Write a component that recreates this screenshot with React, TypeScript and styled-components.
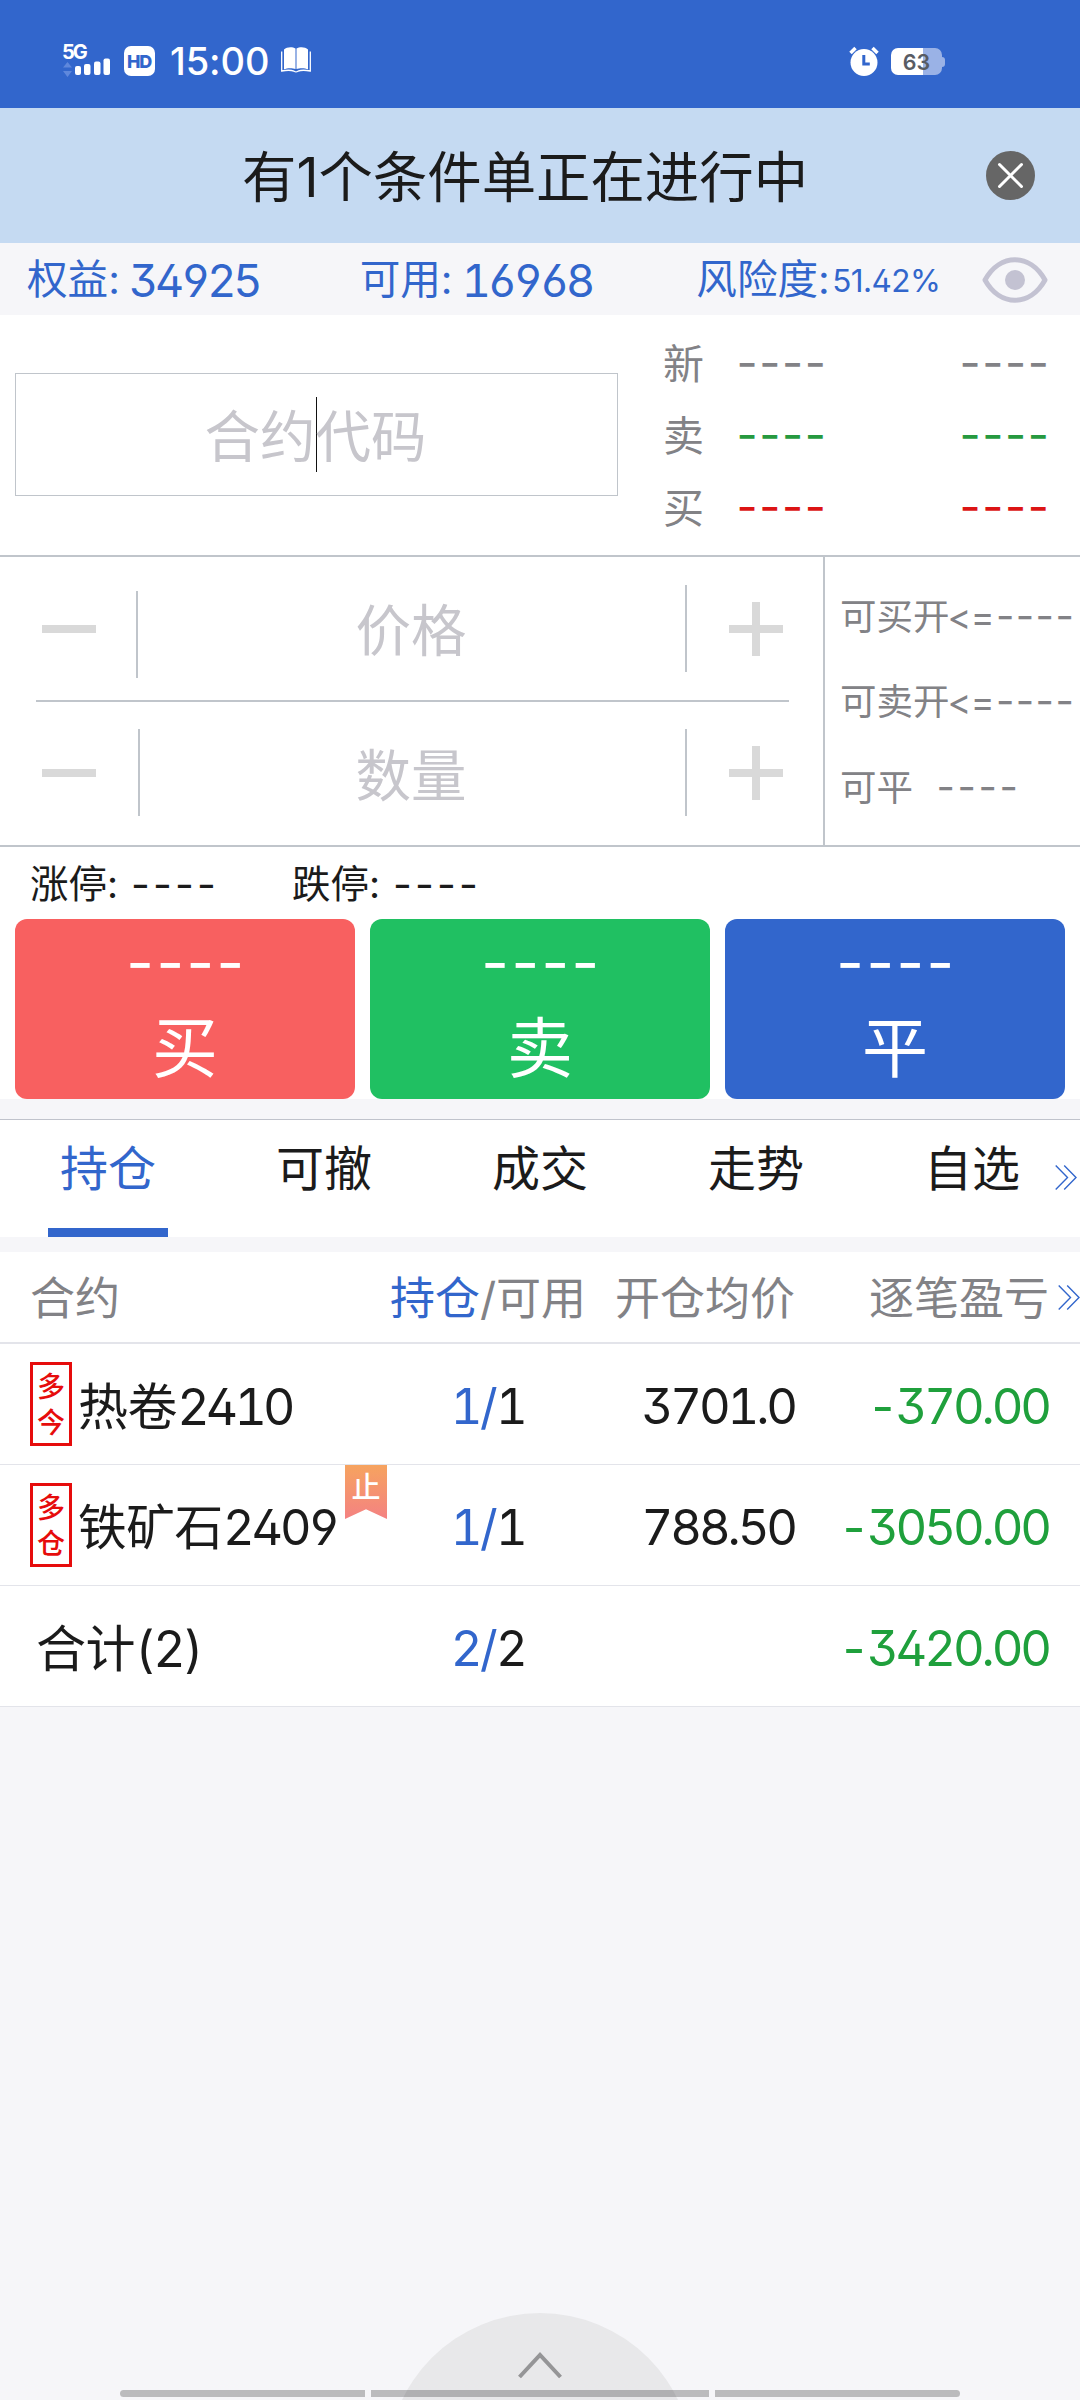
import React from 'react';
import styled, { createGlobalStyle } from 'styled-components';

const c = {
  brand: '#3266cc',
  banner: '#c5daf2',
  page: '#f6f6f9',
  ink: '#1b1b1b',
  grey: '#828286',
  hint: '#c7c6cc',
  line: '#c0c5cb',
  hair: '#e3e4ea',
  red: '#e60c0c',
  green: '#1fa03c',
};

const GlobalStyle = createGlobalStyle`
  * { box-sizing: border-box; }
  body {
    margin: 0;
    background: ${c.page};
    font-family: Inter, "Noto Sans CJK SC", sans-serif;
    font-weight: 400;
    color: ${c.ink};
  }
  svg { display: block; flex: none; }
`;

const Screen = styled.main`
  display: flex;
  flex-direction: column;
  width: 1080px;
  height: 2400px;
  overflow: hidden;
  background: ${c.page};
  white-space: nowrap;
`;

/* ---------- status bar ---------- */

const StatusBar = styled.header`
  display: flex;
  justify-content: space-between;
  height: 108px;
  padding: 43px 135px 0 62px;
  background: ${c.brand};
  color: #fff;
`;

const StatusGroup = styled.div`
  display: flex;
  align-items: flex-start;
`;

const Signal = styled.div`
  width: 62px;
`;

const SignalLabel = styled.div`
  height: 15px;
  font-size: 20px;
  font-weight: 700;
  line-height: 19px;
  letter-spacing: -2px;
`;

const HdBadge = styled.div`
  width: 31px;
  height: 30px;
  margin-top: 3px;
  border-radius: 7px;
  background: #fff;
  color: ${c.brand};
  font-size: 18px;
  font-weight: 800;
  line-height: 31px;
  text-align: center;
  letter-spacing: -1.2px;
  text-indent: -1px;
`;

const Clock = styled.time`
  width: 110px;
  margin: 0 0 0 15px;
  font-size: 38px;
  font-weight: 500;
  line-height: 37px;
  letter-spacing: -0.1px;
`;

const BookIcon = styled.svg`
  margin: 4px 0 0 1px;
`;

const AlarmIcon = styled.svg`
  margin: 3px 12px 0 0;
`;

const Battery = styled.div`
  display: flex;
  align-items: center;
  margin-top: 5px;
`;

const BatteryBody = styled.div`
  width: 51px;
  height: 27px;
  border-radius: 7px;
  background: linear-gradient(90deg, #fff 32px, #9ab2e6 32px);
  color: #585c64;
  font-size: 21.5px;
  font-weight: 600;
  line-height: 28px;
  text-align: center;
`;

const BatteryTip = styled.div`
  width: 3px;
  height: 10px;
  border-radius: 0 4px 4px 0;
  background: #9ab2e6;
`;

/* ---------- notice + account ---------- */

const Notice = styled.section`
  display: flex;
  align-items: center;
  height: 135px;
  padding: 0 45px 0 242px;
  background: ${c.banner};
`;

const NoticeText = styled.p`
  flex: 1;
  margin: 0;
  font-size: 54.4px;
  line-height: 80px;
  padding-top: 3px;
`;

const Account = styled.section`
  display: flex;
  align-items: center;
  height: 72px;
  padding: 1px 32px 0 27px;
  color: ${c.brand};
`;

const Stat = styled.div<{ $w: number }>`
  display: flex;
  align-items: center;
  width: ${(p) => p.$w}px;
`;

const StatLabel = styled.span<{ $w: number }>`
  width: ${(p) => p.$w}px;
  font-size: 40.6px;
  line-height: 60px;
`;

const StatValue = styled.span<{ $small?: boolean }>`
  font-size: ${(p) => (p.$small ? 31.5 : 45)}px;
  line-height: 60px;
  padding-top: 2px;
  letter-spacing: ${(p) => (p.$small ? -0.6 : -3.1)}px;
  font-feature-settings: ${(p) => (p.$small ? "'ss01'" : "'ss01', 'tnum'")};
`;

/* ---------- contract ---------- */

const Contract = styled.section`
  display: flex;
  height: 242px;
  padding-left: 15px;
  border-bottom: 2px solid ${c.line};
  background: #fff;
`;

const CodeInput = styled.div`
  display: flex;
  align-items: center;
  justify-content: center;
  width: 603px;
  height: 123px;
  margin-top: 58px;
  border: 1.5px solid ${c.line};
  color: ${c.hint};
  font-size: 55.5px;
  line-height: 80px;
  padding: 5px 2px 0 0;
`;

const Caret = styled.i`
  width: 1px;
  height: 75px;
  margin: -5px -1px 0 0;
  background: #111;
`;

const Quotes = styled.div`
  margin: 13px 0 0 45px;
`;

const QuoteRow = styled.div`
  display: grid;
  grid-template-columns: 73.5px 223px 100px;
  height: 72px;
  align-items: center;
  color: ${c.grey};
  font-size: 41px;
  line-height: 60px;
`;

const Dashes = styled.span<{ $size: number; $gap: number; $color?: string; $lift?: number }>`
  font-size: ${(p) => p.$size}px;
  letter-spacing: ${(p) => p.$gap}px;
  color: ${(p) => p.$color ?? 'inherit'};
  padding-bottom: ${(p) => p.$lift ?? 0}px;
`;

/* ---------- order form ---------- */

const Order = styled.section`
  display: flex;
  height: 290px;
  border-bottom: 2px solid ${c.line};
  background: #fff;
`;

const Steppers = styled.div`
  width: 825px;
  border-right: 2px solid ${c.line};
`;

const Stepper = styled.div`
  display: flex;
  height: 143px;
  align-items: flex-start;
`;

const StepButton = styled.div<{ $shift?: number }>`
  width: ${(p) => 136 + (p.$shift ?? 0)}px;
  padding-left: 42px;
`;

const Rule = styled.div<{ $top: number }>`
  width: 2px;
  height: 87px;
  margin-top: ${(p) => p.$top}px;
  background: ${c.line};
`;

const Field = styled.div<{ $shift: number; $top: number }>`
  width: ${(p) => 547 - p.$shift}px;
  padding-right: ${(p) => p.$shift + 1}px;
  margin-top: ${(p) => p.$top}px;
  color: ${c.hint};
  font-size: 55.5px;
  line-height: 80px;
  text-align: center;
`;

const MidLine = styled.hr`
  width: 753px;
  height: 2px;
  margin: 0 0 0 36px;
  border: 0;
  background: ${c.line};
`;

const Limits = styled.div`
  padding: 17px 0 0 15px;
  color: ${c.grey};
`;

const LimitRow = styled.div`
  display: flex;
  height: 85.5px;
  align-items: center;
  font-size: 36.5px;
  line-height: 60px;
`;

const Symbols = styled.span`
  width: 48.5px;
  margin-left: -2px;
  font-size: 36px;
  letter-spacing: -0.6px;
`;

const CloseLabel = styled.span`
  width: 96.5px;
`;

const PriceBand = styled.section`
  display: flex;
  height: 72px;
  padding: 7px 0 0 30px;
  background: #fff;
  font-size: 38.5px;
  line-height: 60px;
`;

const BandLabel = styled.span`
  width: 101px;
`;

const BandItem = styled.div`
  display: flex;
  width: 262px;
`;

const Actions = styled.section`
  display: grid;
  grid-template-columns: repeat(3, 340px);
  gap: 15px;
  height: 180px;
  padding: 0 15px;
  background: #fff;
`;

const ActionButton = styled.div<{ $bg: string }>`
  display: flex;
  flex-direction: column;
  align-items: center;
  border-radius: 12px;
  background: ${(p) => p.$bg};
  color: #fff;
`;

const ActionPrice = styled.div`
  height: 84px;
  padding-left: 3px;
  line-height: 87px;
`;

const ActionName = styled.div`
  font-size: 66px;
  line-height: 91px;
`;

/* ---------- tabs ---------- */

const Tabs = styled.nav`
  position: relative;
  display: grid;
  grid-template-columns: repeat(5, 216px);
  height: 118px;
  margin-top: 20px;
  border-top: 1px solid #c0c3cc;
  background: #fff;
`;

const Tab = styled.div<{ $active?: boolean }>`
  display: flex;
  flex-direction: column;
  align-items: center;
  justify-content: space-between;
  padding-top: 13px;
  color: ${(p) => (p.$active ? c.brand : c.ink)};
  font-size: 48px;
  line-height: 72px;
`;

const Underline = styled.div`
  width: 120px;
  height: 9px;
  background: ${c.brand};
`;

const TabsMore = styled.div`
  position: absolute;
  right: 3px;
  top: 45px;
`;

/* ---------- positions ---------- */

const columns = '384px 208px 202px 254px 1fr';

const TableHead = styled.div`
  display: grid;
  grid-template-columns: ${columns};
  align-items: center;
  height: 92px;
  margin-top: 15px;
  border-bottom: 2px solid ${c.hair};
  background: #fff;
  color: ${c.grey};
  font-size: 45px;
  line-height: 66px;
`;

const HeadCell = styled.div<{ $align?: string }>`
  padding: ${(p) => (p.$align ? '3px 0 0' : '3px 0 0 30px')};
  margin-right: ${(p) => (p.$align === 'right' ? -1 : 0)}px;
  text-align: ${(p) => p.$align ?? 'left'};
`;

const HeadMore = styled.div`
  padding-left: 10px;
`;

const Accent = styled.span`
  color: ${c.brand};
`;

const TableRow = styled.div`
  display: grid;
  grid-template-columns: ${columns};
  align-items: center;
  height: 121px;
  border-bottom: 1px solid ${c.hair};
  background: #fff;
  font-size: 49px;
  line-height: 70px;
  font-feature-settings: 'tnum', 'ss01';
`;

const NameCell = styled.div`
  position: relative;
  display: flex;
  align-items: center;
  height: 120px;
  padding-left: 30px;
`;

const Tag = styled.div`
  width: 42px;
  height: 84px;
  padding-top: 4px;
  margin-right: 6px;
  border: 3px solid ${c.red};
  color: ${c.red};
  font-size: 28px;
  font-weight: 500;
  line-height: 36px;
  text-align: center;
  white-space: normal;
`;

const Name = styled.span<{ $size: number; $indent: number }>`
  font-size: ${(p) => p.$size}px;
  margin-left: ${(p) => p.$indent}px;
  padding-top: 6px;
  letter-spacing: -0.4px;
`;

const Code = styled.span<{ $tight: number }>`
  letter-spacing: ${(p) => -p.$tight}px;
`;

const Ribbon = styled.div`
  position: absolute;
  left: 345px;
  top: 0;
  width: 42px;
  height: 54px;
  clip-path: polygon(0 0, 100% 0, 100% 100%, 50% 82%, 0 100%);
  background: linear-gradient(#f6a35f, #f48282);
  color: #fff;
  font-size: 29px;
  font-weight: 500;
  line-height: 46px;
  text-align: center;
`;

const Lots = styled.div`
  display: grid;
  grid-template-columns: 1fr 16px 1fr;
  width: 208px;
  padding-top: 5px;
`;

const LotHeld = styled.span`
  color: ${c.brand};
  text-align: right;
  letter-spacing: -2.5px;
`;

const Num = styled.div<{ $color?: string }>`
  padding-top: 5px;
  margin-right: -1px;
  text-align: right;
  color: ${(p) => p.$color ?? 'inherit'};
  letter-spacing: -3.1px;
`;

/* ---------- bottom ---------- */

const Bottom = styled.footer`
  position: relative;
  flex: 1;
  overflow: hidden;
`;

const Drawer = styled.div`
  position: absolute;
  left: 387px;
  bottom: -219px;
  width: 306px;
  height: 306px;
  padding: 37px 0 0 131px;
  border-radius: 50%;
  background: #e8e8ea;
`;

const NavBars = styled.div`
  position: absolute;
  left: 120px;
  bottom: 3px;
  display: grid;
  grid-template-columns: 245px 338px 245px;
  gap: 6px;
`;

const NavBar = styled.div<{ $radius?: string }>`
  height: 7px;
  border-radius: ${(p) => p.$radius ?? '0'};
  background: rgba(0, 0, 0, 0.24);
`;

const DoubleChevron = () => (
  <svg width="22" height="25" viewBox="0 0 22 25" fill="none" stroke={c.brand} strokeWidth="1.4">
    <path d="M.7.5 12.5 12.5.7 24.5M9.2.5 21 12.5 9.2 24.5" />
  </svg>
);

const Minus = ({ top }: { top: number }) => (
  <svg width="54" height={top + 8} fill="#d9d9d9">
    <rect y={top} width="54" height="8" />
  </svg>
);

const Plus = ({ top }: { top: number }) => (
  <svg width="54" height={top + 54} fill="#d9d9d9">
    <rect y={top + 23} width="54" height="8" />
    <rect x="23" y={top} width="8" height="54" />
  </svg>
);

const quotes = [
  { label: '新', color: c.grey },
  { label: '卖', color: '#26993f' },
  { label: '买', color: '#dc1414' },
];

const actions = [
  { label: '买', bg: '#f86060' },
  { label: '卖', bg: '#20c062' },
  { label: '平', bg: c.brand },
];

const tabs = ['持仓', '可撤', '成交', '走势', '自选'];

const positions = [
  { tag: '多今', name: '热卷', code: '2410', tight: 3.8, size: 50, held: 1, free: 1, price: '3701.0', profit: '-370.00' },
  { tag: '多仓', name: '铁矿石', code: '2409', tight: 3, size: 48.7, held: 1, free: 1, price: '788.50', profit: '-3050.00', stop: true },
  { tag: '', name: '合计', code: '(2)', tight: 1.6, size: 50, held: 2, free: 2, price: '', profit: '-3420.00' },
];

export default function App() {
  return (
    <Screen>
      <GlobalStyle />
      <StatusBar>
        <StatusGroup>
          <Signal>
            <SignalLabel>5G</SignalLabel>
            <svg width="50" height="20" viewBox="0 0 50 20">
              <path d="M1 9.5 5.5 4 10 9.5zM1 13h9l-4.500 6z" fill="#5f88dc" />
              <g fill="#fff">
                <rect x="13" y="8" width="6" height="9" rx="2" />
                <rect x="22" y="6" width="6.500" height="11" rx="2" />
                <rect x="32" y="3.500" width="6.500" height="13.500" rx="2" />
                <rect x="41.500" y="0.500" width="6.500" height="16.500" rx="2" />
              </g>
            </svg>
          </Signal>
          <HdBadge>HD</HdBadge>
          <Clock>15:00</Clock>
          <BookIcon width="30" height="26" viewBox="0 0 30 26" fill="#fff">
            <path d="M3 2.500C6-.3 11.500-.3 14.500 1.600V22C11.500 20.800 6 20.800 3 22.300zM15.500 1.600c3-1.900 8.500-1.900 11.500.900v19.800c-3-1.500-8.500-1.500-11.500-.300z" />
            <path d="M.7 4.500v19.500c4-.8 9-1.200 12.300.2 1 .7 3 .7 4 0 3.300-1.400 8.300-1 12.300-.2V4.500" fill="none" stroke="#fff" strokeWidth="1.300" />
          </BookIcon>
        </StatusGroup>
        <StatusGroup>
          <AlarmIcon width="30" height="30" viewBox="0 0 30 30">
            <circle cx="15" cy="16.500" r="13.500" fill="#fff" />
            <path d="M1.500 7 6.500 2M28.500 7 23.500 2" stroke="#fff" strokeWidth="3.500" />
            <path d="M14.800 9v9h6" fill="none" stroke={c.brand} strokeWidth="3" />
          </AlarmIcon>
          <Battery>
            <BatteryBody>63</BatteryBody>
            <BatteryTip />
          </Battery>
        </StatusGroup>
      </StatusBar>

      <Notice>
        <NoticeText>有1个条件单正在进行中</NoticeText>
        <svg width="49" height="49" viewBox="0 0 49 49">
          <circle cx="24.500" cy="24.500" r="24.500" fill="#666" />
          <path d="M13.500 13.500 35.500 35.500M35.500 13.500 13.500 35.500" stroke="#fff" strokeWidth="3" strokeLinecap="round" />
        </svg>
      </Notice>

      <Account>
        <Stat $w={333}>
          <StatLabel $w={102}>权益:</StatLabel>
          <StatValue>34925</StatValue>
        </Stat>
        <Stat $w={337}>
          <StatLabel $w={102}>可用:</StatLabel>
          <StatValue>16968</StatValue>
        </Stat>
        <Stat $w={286}>
          <StatLabel $w={136}>风险度:</StatLabel>
          <StatValue $small>51.42%</StatValue>
        </Stat>
        <svg width="66" height="48" viewBox="0 0 66 48">
          <path d="M3 24C18-3 48-3 63 24 48 51 18 51 3 24z" fill="none" stroke="#c3c2d2" strokeWidth="5" strokeLinejoin="round" />
          <circle cx="33" cy="24" r="10" fill="#c3c2d2" />
        </svg>
      </Account>

      <Contract>
        <CodeInput>
          合约<Caret />代码
        </CodeInput>
        <Quotes>
          {quotes.map((q) => (
            <QuoteRow key={q.label}>
              <span>{q.label}</span>
              <Dashes $size={46} $gap={1.6} $lift={5} $color={q.color}>----</Dashes>
              <Dashes $size={46} $gap={1.6} $lift={5} $color={q.color}>----</Dashes>
            </QuoteRow>
          ))}
        </Quotes>
      </Contract>

      <Order>
        <Steppers>
          <Stepper>
            <StepButton><Minus top={68} /></StepButton>
            <Rule $top={34} />
            <Field $shift={0} $top={34}>价格</Field>
            <Rule $top={28} />
            <StepButton><Plus top={45} /></StepButton>
          </Stepper>
          <MidLine />
          <Stepper>
            <StepButton $shift={2}><Minus top={67} /></StepButton>
            <Rule $top={27} />
            <Field $shift={2} $top={34}>数量</Field>
            <Rule $top={27} />
            <StepButton><Plus top={44} /></StepButton>
          </Stepper>
        </Steppers>
        <Limits>
          {['可买开', '可卖开'].map((label) => (
            <LimitRow key={label}>
              {label}
              <Symbols>&lt;=</Symbols>
              <Dashes $size={40} $gap={1.4} $lift={2}>----</Dashes>
            </LimitRow>
          ))}
          <LimitRow>
            <CloseLabel>可平</CloseLabel>
            <Dashes $size={40} $gap={2.6} $lift={2}>----</Dashes>
          </LimitRow>
        </Limits>
      </Order>

      <PriceBand>
        {['涨停:', '跌停:'].map((label) => (
          <BandItem key={label}>
            <BandLabel>{label}</BandLabel>
            <Dashes $size={41} $gap={3.1}>----</Dashes>
          </BandItem>
        ))}
      </PriceBand>

      <Actions>
        {actions.map((a) => (
          <ActionButton key={a.label} $bg={a.bg}>
            <ActionPrice>
              <Dashes $size={60} $gap={2.5}>----</Dashes>
            </ActionPrice>
            <ActionName>{a.label}</ActionName>
          </ActionButton>
        ))}
      </Actions>

      <Tabs>
        {tabs.map((t, i) => (
          <Tab key={t} $active={i === 0}>
            {t}
            {i === 0 && <Underline />}
          </Tab>
        ))}
        <TabsMore><DoubleChevron /></TabsMore>
      </Tabs>

      <TableHead>
        <HeadCell>合约</HeadCell>
        <HeadCell $align="center"><Accent>持仓</Accent>/可用</HeadCell>
        <HeadCell $align="right">开仓均价</HeadCell>
        <HeadCell $align="right">逐笔盈亏</HeadCell>
        <HeadMore><DoubleChevron /></HeadMore>
      </TableHead>
      {positions.map((p) => (
        <TableRow key={p.name}>
          <NameCell>
            {p.tag && <Tag>{p.tag}</Tag>}
            <Name $size={p.size} $indent={p.tag ? 0 : 6}>
              {p.name}
              <Code $tight={p.tight}>{p.code}</Code>
            </Name>
            {p.stop && <Ribbon>止</Ribbon>}
          </NameCell>
          <Lots>
            <LotHeld>{p.held}</LotHeld>
            <Accent>/</Accent>
            <span>{p.free}</span>
          </Lots>
          <Num>{p.price}</Num>
          <Num $color={c.green}>{p.profit}</Num>
        </TableRow>
      ))}

      <Bottom>
        <Drawer>
          <svg width="44" height="30" viewBox="0 0 44 30" fill="none" stroke="#959597" strokeWidth="4">
            <path d="M1.500 27 22 5 42.500 27" />
          </svg>
        </Drawer>
        <NavBars>
          <NavBar $radius="4px 0 0 4px" />
          <NavBar />
          <NavBar $radius="0 4px 4px 0" />
        </NavBars>
      </Bottom>
    </Screen>
  );
}
